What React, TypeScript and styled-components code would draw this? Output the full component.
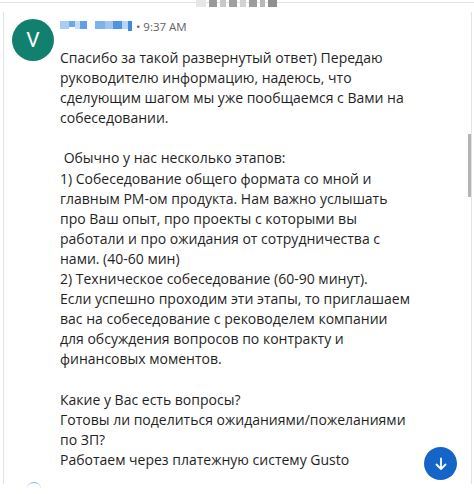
import React from "react";
import styled, { createGlobalStyle } from "styled-components";

const Global = createGlobalStyle`
  html, body { margin: 0; padding: 0; background: #ffffff; }
  body { width: 474px; height: 494px; overflow: hidden; font-family: "Open Sans", "Noto Sans", sans-serif; }
`;

const Page = styled.div`
  position: relative;
  width: 474px;
  height: 494px;
  overflow: hidden;
  background: #fff;
`;

const TopRule = styled.div`
  height: 2px;
  border-bottom: 1px solid #e3e3e3;
`;

const Redacted = styled.div`
  position: absolute;
  top: 0;
  left: 196px;
  display: flex;
  gap: 3px;
`;

const Px = styled.span<{ $c: string; $w: number }>`
  display: block;
  width: ${(p) => p.$w}px;
  height: 7px;
  background: ${(p) => p.$c};
`;

const Panel = styled.div`
  margin: 9px 2px 0 3px;
  border-left: 1px solid #e3e3e3;
  border-right: 1px solid #e3e3e3;
  height: 472px;
  position: relative;
`;

const Message = styled.div`
  display: grid;
  grid-template-columns: 42px 1fr;
  column-gap: 6px;
  padding: 7px 0 0 8px;
`;

const Avatar = styled.div`
  width: 42px;
  height: 42px;
  border-radius: 50%;
  background: #12806f;
  color: #fff;
  display: flex;
  align-items: center;
  justify-content: center;
  font-size: 21px;
  font-family: "Roboto", "Open Sans", sans-serif;
`;

const Header = styled.div`
  display: flex;
  align-items: center;
  height: 16px;
  margin-top: -1px;
  font-size: 11.5px;
  color: #5f6368;
`;

const Name = styled.span`
  display: flex;
  margin-right: 4px;
`;

const NameBlock = styled.span<{ $c: string; $w: number; $h?: number }>`
  display: block;
  width: ${(p) => p.$w}px;
  height: ${(p) => p.$h ?? 8}px;
  background: ${(p) => p.$c};
`;

const Body = styled.div`
  margin-top: 14px;
  font-size: 14px;
  line-height: 20.1px;
  color: #1f1f1f;
  white-space: pre-wrap;
  width: 356px;
`;

const ScrollThumb = styled.div`
  position: absolute;
  right: 0px;
  top: 122px;
  width: 3px;
  height: 63px;
  background: #b5b5b5;
`;

const NextAvatarEdge = styled.div`
  position: absolute;
  left: 23px;
  bottom: -11px;
  width: 14px;
  height: 12px;
  border-radius: 50% 50% 0 0;
  border-top: 1px solid #8fb8ea;
`;

const Fab = styled.div`
  position: absolute;
  left: 424px;
  top: 447px;
  width: 33px;
  height: 33px;
  border-radius: 50%;
  background: #1565c8;
  display: flex;
  align-items: center;
  justify-content: center;
`;

const text = `Спасибо за такой развернутый ответ) Передаю руководителю информацию, надеюсь, что сделующим шагом мы уже пообщаемся с Вами на собеседовании.

 Обычно у нас несколько этапов:
1) Собеседование общего формата со мной и главным PM-ом продукта. Нам важно услышать про Ваш опыт, про проекты с которыми вы работали и про ожидания от сотрудничества с нами. (40-60 мин)
2) Техническое собеседование (60-90 минут).
Если успешно проходим эти этапы, то приглашаем вас на собеседование с реководелем компании
для обсуждения вопросов по контракту и финансовых моментов.

Какие у Вас есть вопросы?
Готовы ли поделиться ожиданиями/пожеланиями по ЗП?
Работаем через платежную систему Gusto`;

export default function App() {
  return (
    <Page>
      <Global />
      <TopRule />
      <Redacted>
        <Px $c="#e6e6e6" $w={10} />
        <Px $c="#9a9a9a" $w={8} />
        <Px $c="#c8c8c8" $w={6} />
        <Px $c="#a0a0a0" $w={8} />
        <Px $c="#d2d2d2" $w={6} />
        <Px $c="#9c9c9c" $w={8} />
        <Px $c="#b8b8b8" $w={5} />
        <Px $c="#909090" $w={9} />
      </Redacted>
      <Panel>
        <Message>
          <Avatar>V</Avatar>
          <div>
            <Header>
              <Name>
                <NameBlock $c="#a9cdf0" $w={9} />
                <NameBlock $c="#6aa8e8" $w={6} $h={6} />
                <NameBlock $c="#c4dcf3" $w={5} />
                <NameBlock $c="#5f9fe6" $w={7} />
                <NameBlock $c="#ffffff" $w={8} />
                <NameBlock $c="#7db2ea" $w={10} />
                <NameBlock $c="#9fc6ef" $w={8} />
                <NameBlock $c="#4f94e2" $w={9} />
                <NameBlock $c="#b7d5f2" $w={6} />
                <NameBlock $c="#3d8ae0" $w={4} $h={10} />
              </Name>
              <span>• 9:37 AM</span>
            </Header>
            <Body>{text}</Body>
          </div>
        </Message>
        <ScrollThumb />
        <NextAvatarEdge />
      </Panel>
      <Fab>
        <svg width="14" height="14" viewBox="0 0 14 14" fill="none" stroke="#fff" strokeWidth="1.8" strokeLinecap="round" strokeLinejoin="round">
          <path d="M7 1.5v10.5M2.5 7.5 7 12l4.5-4.5" />
        </svg>
      </Fab>
    </Page>
  );
}
